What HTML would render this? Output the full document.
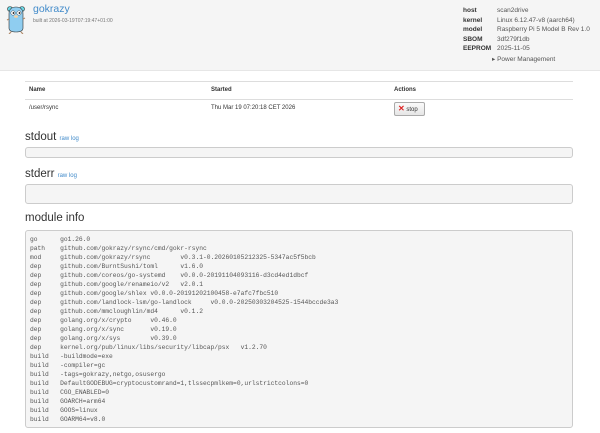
<!DOCTYPE html>
<html><head><meta charset="utf-8"><style>
*{margin:0;padding:0;box-sizing:border-box}
body{width:600px;height:433px;background:#fff;font-family:"Liberation Sans",sans-serif;color:#333;position:relative;overflow:hidden}
.a{position:absolute;white-space:nowrap}
.hdr{position:absolute;left:0;top:0;width:600px;height:71px;background:#f5f5f5;border-bottom:1px solid #e6e6e6}
.blue{color:#428bca}
.k{font-weight:bold;color:#333;font-size:6.5px}
.v{color:#555;font-size:6.5px}
.line{position:absolute;left:25px;width:548px;height:1px;background:#ddd}
.box{position:absolute;left:25px;width:548px;background:#f5f5f5;border:1px solid #ccc;border-radius:3px}
h2{position:absolute;font-weight:normal;font-size:11.5px;color:#333;white-space:nowrap}
h2 span{font-size:6px;color:#428bca}
pre{font-family:"Liberation Mono",monospace;font-size:6.28px;line-height:9px;color:#555;tab-size:8;-moz-tab-size:8;padding:4px 0 0 4px}
</style></head><body>
<div class="hdr"></div>
<svg class="a" style="left:6px;top:4px" width="20" height="30" viewBox="0 0 20 30">
<ellipse cx="4" cy="5" rx="2.5" ry="2.5" fill="#6ad7e5" stroke="#333" stroke-width=".6"/>
<ellipse cx="16" cy="5" rx="2.5" ry="2.5" fill="#6ad7e5" stroke="#333" stroke-width=".6"/>
<path d="M3 10 Q3 3 10 3 Q17 3 17 10 L17 24 Q17 28 10 28 Q3 28 3 24 Z" fill="#8fcdf0" stroke="#333" stroke-width=".6"/>
<circle cx="7" cy="9" r="2.2" fill="#fff" stroke="#333" stroke-width=".4"/><circle cx="13" cy="9" r="2.2" fill="#fff" stroke="#333" stroke-width=".4"/>
<circle cx="7.5" cy="9" r=".9" fill="#000"/><circle cx="13.5" cy="9" r=".9" fill="#000"/>
<ellipse cx="10" cy="12.5" rx="2" ry="1.3" fill="#f6d2a2"/>
<path d="M1 16 L3 15 M17 15 L19 14 M5 28 L3 30 M15 28 L17 30" stroke="#b08a6a" stroke-width="1.2"/>
</svg>
<div class="a blue" style="left:33px;top:3px;font-size:10.5px">gokrazy</div>
<div class="a" style="left:33px;top:18px;font-size:5px;color:#777">built at 2026-03-19T07:19:47+01:00</div>
<div class="a k" style="left:463px;top:7px">host</div><div class="a v" style="left:497px;top:7px">scan2drive</div>
<div class="a k" style="left:463px;top:16.5px">kernel</div><div class="a v" style="left:497px;top:16.5px">Linux 6.12.47-v8 (aarch64)</div>
<div class="a k" style="left:463px;top:26px">model</div><div class="a v" style="left:497px;top:26px">Raspberry Pi 5 Model B Rev 1.0</div>
<div class="a k" style="left:463px;top:35.5px">SBOM</div><div class="a v" style="left:497px;top:35.5px">3df279f1db</div>
<div class="a k" style="left:463px;top:45px">EEPROM</div><div class="a v" style="left:497px;top:45px">2025-11-05</div>
<div class="a v" style="left:492px;top:55px">▸ Power Management</div>
<div class="line" style="top:81px"></div>
<div class="a" style="left:29px;top:87px;font-size:6px;font-weight:bold">Name</div>
<div class="a" style="left:211px;top:87px;font-size:6px;font-weight:bold">Started</div>
<div class="a" style="left:394px;top:87px;font-size:6px;font-weight:bold">Actions</div>
<div class="line" style="top:99px"></div>
<div class="a" style="left:29px;top:105px;font-size:6px">/user/rsync</div>
<div class="a" style="left:211px;top:105px;font-size:6px">Thu Mar 19 07:20:18 CET 2026</div>
<div class="a" style="left:394px;top:102px;width:31px;height:14px;border:1px solid #aaa;border-radius:2px;background:linear-gradient(#fafafa,#e6e6e6);font-size:6px;padding:3px 0 0 3px"><span style="color:#d22;font-weight:bold;font-size:8px;line-height:6px">✕</span> stop</div>
<h2 style="left:25px;top:131px">stdout <span>raw log</span></h2>
<div class="box" style="top:147px;height:11px"></div>
<h2 style="left:25px;top:168px">stderr <span>raw log</span></h2>
<div class="box" style="top:184px;height:20px"></div>
<h2 style="left:25px;top:212px">module info</h2>
<div class="box" style="top:230px;height:198px"><pre>go	go1.26.0
path	github.com/gokrazy/rsync/cmd/gokr-rsync
mod	github.com/gokrazy/rsync	v0.3.1-0.20260105212325-5347ac5f5bcb
dep	github.com/BurntSushi/toml	v1.6.0
dep	github.com/coreos/go-systemd	v0.0.0-20191104093116-d3cd4ed1dbcf
dep	github.com/google/renameio/v2	v2.0.1
dep	github.com/google/shlex	v0.0.0-20191202100458-e7afc7fbc510
dep	github.com/landlock-lsm/go-landlock	v0.0.0-20250303204525-1544bccde3a3
dep	github.com/mmcloughlin/md4	v0.1.2
dep	golang.org/x/crypto	v0.46.0
dep	golang.org/x/sync	v0.19.0
dep	golang.org/x/sys	v0.39.0
dep	kernel.org/pub/linux/libs/security/libcap/psx	v1.2.70
build	-buildmode=exe
build	-compiler=gc
build	-tags=gokrazy,netgo,osusergo
build	DefaultGODEBUG=cryptocustomrand=1,tlssecpmlkem=0,urlstrictcolons=0
build	CGO_ENABLED=0
build	GOARCH=arm64
build	GOOS=linux
build	GOARM64=v8.0</pre></div>
</body></html>
